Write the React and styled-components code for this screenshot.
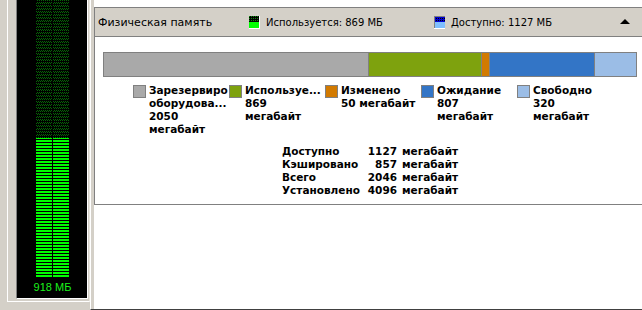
import { Fragment } from "react";
import styled, { createGlobalStyle } from "styled-components";

const GlobalStyle = createGlobalStyle`
  html, body {
    margin: 0;
    padding: 0;
    background: #d4d0c8;
  }
  body {
    font-family: "DejaVu Sans", "Liberation Sans", sans-serif;
    font-size: 11px;
    color: #000;
  }
`;

const Window = styled.div`
  display: flex;
  width: 642px;
  height: 310px;
  overflow: hidden;
  background: #d4d0c8;
`;

const LeftPane = styled.div`
  width: 83px;
  flex: none;
  padding-left: 7px;
`;

const Frame = styled.div`
  height: 299px;
  padding: 0 1px 2px 8px;
  border-left: 1px solid #fff;
  border-bottom: 1px solid #fff;
  border-right: 1px solid #e8e6e0;
`;

const Meter = styled.div`
  height: 298px;
  background: #000;
  border-left: 1px solid #808080;
  border-right: 1px solid #fff;
  border-bottom: 1px solid #fff;
  display: flex;
  flex-direction: column;
  align-items: center;
`;

const Track = styled.div`
  display: flex;
  gap: 1px;
  height: 278px;
  margin-left: 1px;
`;

const Column = styled.div`
  width: 16px;
  display: flex;
  flex-direction: column;
  justify-content: flex-end;
  background:
    repeating-linear-gradient(to top, #000 0 1px, transparent 1px 3px),
    conic-gradient(#066406 25%, #000 0 50%, #066406 0 75%, #000 0) 0 0 / 2px 2px;
`;

const Fill = styled.div`
  background: repeating-linear-gradient(to top, #000 0 1px, #00ff00 1px 3px);
`;

const MeterLabel = styled.div`
  font-family: "Liberation Sans", sans-serif;
  font-size: 11px;
  line-height: 19px;
  color: #1cf01c;
  margin-left: 1px;
`;

const RightPane = styled.div`
  flex: 1;
  border-left: 1px solid #fff;
  border-bottom: 1px solid #404040;
`;

const Scroller = styled.div`
  height: 100%;
  background: #fff;
  border-left: 3px solid #d4d0c8;
  padding-top: 7px;
  box-sizing: border-box;
`;

const Panel = styled.div`
  margin-right: -3px;
  border: 1px solid #808080;
  border-right: none;
  background: #fff;
`;

const Header = styled.div`
  display: grid;
  grid-template-columns: 151px 185px 1fr auto;
  align-items: center;
  height: 28px;
  padding: 0 15px 0 3px;
  background: #d4d0c8;
  border-bottom: 1px solid #808080;
`;

const Title = styled.span`
  font-size: 11px;
`;

const Key = styled.span`
  display: flex;
  align-items: center;
  gap: 6px;
  font-size: 10px;
`;

const Collapse = styled.span`
  width: 0;
  height: 0;
  border-left: 5px solid transparent;
  border-right: 5px solid transparent;
  border-bottom: 5px solid #000;
  margin-top: -2px;
`;

const Body = styled.div`
  padding: 15px 8px 7px 8px;
`;

const Bar = styled.div`
  display: flex;
  height: 23px;
  border: 1px solid #808080;
`;

const Segment = styled.div`
  background: ${p => p.color};
  & + & {
    border-left: 1px solid #808080;
  }
`;

const Legend = styled.div`
  display: flex;
  justify-content: center;
  margin-top: 8px;
  padding-left: 6px;
`;

const LegendItem = styled.div`
  width: 96px;
  display: flex;
  gap: 3px;
`;

const Swatch = styled.span`
  flex: none;
  width: 11px;
  height: 11px;
  border: 1px solid #808080;
  background: ${p => p.color};
`;

const LegendText = styled.div`
  width: 80px;
  font-weight: bold;
  font-size: 10.5px;
  line-height: 13px;
  white-space: nowrap;
  overflow: hidden;
  margin-top: -1px;
`;

const Stats = styled.div`
  display: grid;
  grid-template-columns: 84px 31px 63px;
  justify-content: center;
  margin-top: 9px;
  padding-left: 2px;
  font-weight: bold;
  font-size: 10.5px;
  line-height: 13px;
`;

const Value = styled.span`
  text-align: right;
  white-space: nowrap;
`;

const Unit = styled.span`
  padding-left: 5px;
  white-space: nowrap;
`;

function UsedIcon() {
  return (
    <svg width="11" height="13" viewBox="0 0 11 13">
      <defs>
        <pattern id="dotsG" width="2" height="2" patternUnits="userSpaceOnUse">
          <rect width="2" height="2" fill="#000" />
          <rect width="1" height="1" fill="#0c8a0c" />
        </pattern>
      </defs>
      <rect x="0" y="0" width="11" height="13" fill="#fff" />
      <rect x="0" y="0" width="10" height="6" fill="url(#dotsG)" />
      <rect x="0" y="6" width="10" height="6" fill="#00ff00" />
    </svg>
  );
}

function FreeIcon() {
  return (
    <svg width="11" height="13" viewBox="0 0 11 13">
      <defs>
        <pattern id="dotsB" width="2" height="2" patternUnits="userSpaceOnUse">
          <rect width="2" height="2" fill="#0000d0" />
          <rect width="1" height="1" fill="#000" />
        </pattern>
      </defs>
      <rect x="0" y="0" width="11" height="13" fill="#808080" />
      <rect x="1" y="1" width="10" height="5" fill="url(#dotsB)" />
      <rect x="1" y="6" width="10" height="6" fill="#7fbfff" />
      <rect x="0" y="12" width="11" height="1" fill="#fff" />
    </svg>
  );
}

const segments = [
  { key: "reserved", value: 2050, color: "#a9a9a9" },
  { key: "used", value: 869, color: "#7ea20e" },
  { key: "modified", value: 50, color: "#d27a00" },
  { key: "standby", value: 807, color: "#3375c6" },
  { key: "free", value: 320, color: "#9bbde6" },
];

const legend = [
  { color: "#a9a9a9", lines: ["Зарезервиро", "оборудова...", "2050", "мегабайт"] },
  { color: "#7ea20e", lines: ["Используе...", "869", "мегабайт"] },
  { color: "#d27a00", lines: ["Изменено", "50 мегабайт"] },
  { color: "#3375c6", lines: ["Ожидание", "807", "мегабайт"] },
  { color: "#9bbde6", lines: ["Свободно", "320", "мегабайт"] },
];

const stats = [
  ["Доступно", "1127"],
  ["Кэшировано", "857"],
  ["Всего", "2046"],
  ["Установлено", "4096"],
];

export default function App() {
  const usedShare = 0.505;
  return (
    <Window>
      <GlobalStyle />
      <LeftPane>
        <Frame>
          <Meter>
            <Track>
              <Column>
                <Fill style={{ height: `${usedShare * 100}%` }} />
              </Column>
              <Column>
                <Fill style={{ height: `${usedShare * 100}%` }} />
              </Column>
            </Track>
            <MeterLabel>918 МБ</MeterLabel>
          </Meter>
        </Frame>
      </LeftPane>
      <RightPane>
        <Scroller>
          <Panel>
            <Header>
              <Title>Физическая память</Title>
              <Key>
                <UsedIcon />
                Используется: 869 МБ
              </Key>
              <Key>
                <FreeIcon />
                Доступно: 1127 МБ
              </Key>
              <Collapse />
            </Header>
            <Body>
              <Bar>
                {segments.map(s => (
                  <Segment key={s.key} color={s.color} style={{ flex: s.value }} />
                ))}
              </Bar>
              <Legend>
                {legend.map((item, i) => (
                  <LegendItem key={i}>
                    <Swatch color={item.color} />
                    <LegendText>
                      {item.lines.map((l, j) => (
                        <div key={j}>{l}</div>
                      ))}
                    </LegendText>
                  </LegendItem>
                ))}
              </Legend>
              <Stats>
                {stats.map(([label, value]) => (
                  <Fragment key={label}>
                    <span>{label}</span>
                    <Value>{value}</Value>
                    <Unit>мегабайт</Unit>
                  </Fragment>
                ))}
              </Stats>
            </Body>
          </Panel>
        </Scroller>
      </RightPane>
    </Window>
  );
}
